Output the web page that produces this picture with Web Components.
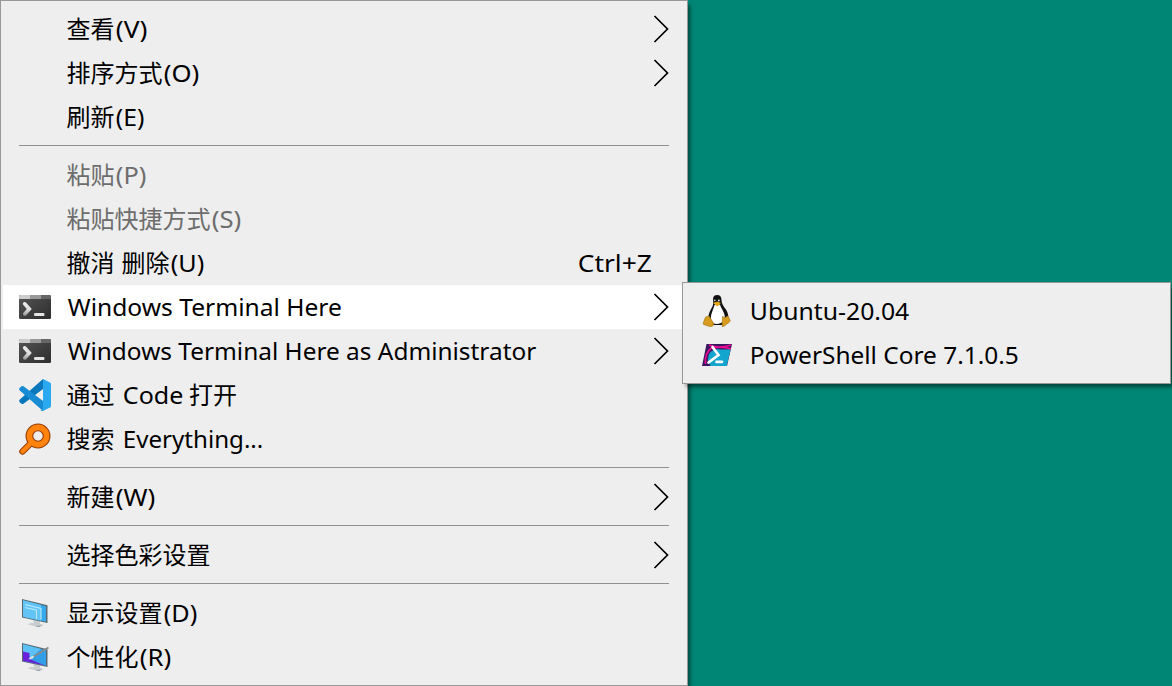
<!DOCTYPE html>
<html lang="zh-CN">
<head>
<meta charset="utf-8">
<title>Context menu</title>
<style>
html, body { margin: 0; height: 100%; overflow: hidden; background: #008675; }
body { font: 24px/44px "Noto Sans", "Noto Sans CJK SC", sans-serif; color: #000; }
</style>
</head>
<body>
<desktop-view>
  <context-menu>
    <menu-item arrow>查看<fit-text w="31.5">(V)</fit-text></menu-item>
    <menu-item arrow>排序方式<fit-text w="35.5">(O)</fit-text></menu-item>
    <menu-item>刷新<fit-text w="28.5">(E)</fit-text></menu-item>
    <menu-separator></menu-separator>
    <menu-item disabled>粘贴<fit-text w="30.5">(P)</fit-text></menu-item>
    <menu-item disabled>粘贴快捷方式<fit-text w="29.5">(S)</fit-text></menu-item>
    <menu-item>撤消<fit-text w="7"></fit-text>删除<fit-text w="33.5">(U)</fit-text><fit-text slot="shortcut" w="74">Ctrl+Z</fit-text></menu-item>
    <menu-item active arrow><app-icon slot="icon" name="terminal"></app-icon><fit-text w="274">Windows Terminal Here</fit-text></menu-item>
    <menu-item arrow><app-icon slot="icon" name="terminal"></app-icon><fit-text w="468.5">Windows Terminal Here as Administrator</fit-text></menu-item>
    <menu-item><app-icon slot="icon" name="code"></app-icon>通过<fit-text w="7"></fit-text><fit-text w="60.5">Code</fit-text><fit-text w="7"></fit-text>打开</menu-item>
    <menu-item><app-icon slot="icon" name="search"></app-icon>搜索<fit-text w="7"></fit-text><fit-text w="140.5">Everything...</fit-text></menu-item>
    <menu-separator></menu-separator>
    <menu-item arrow>新建<fit-text w="39.5">(W)</fit-text></menu-item>
    <menu-separator></menu-separator>
    <menu-item arrow>选择色彩设置</menu-item>
    <menu-separator></menu-separator>
    <menu-item><app-icon slot="icon" name="display"></app-icon>显示设置<fit-text w="33.5">(D)</fit-text></menu-item>
    <menu-item><app-icon slot="icon" name="personalize"></app-icon>个性化<fit-text w="31.5">(R)</fit-text></menu-item>
  </context-menu>
  <context-menu slot="submenu" sub>
    <menu-item><app-icon slot="icon" name="tux"></app-icon><fit-text w="159.5">Ubuntu-20.04</fit-text></menu-item>
    <menu-item><app-icon slot="icon" name="powershell"></app-icon><fit-text w="269">PowerShell Core 7.1.0.5</fit-text></menu-item>
  </context-menu>
</desktop-view>
<script>
const icons = {
  terminal: `<svg viewBox="0 0 32 32"><defs><linearGradient id="g" x2="1" y2="1"><stop stop-color="#555"/><stop offset="1" stop-color="#2d2d2d"/></linearGradient><linearGradient id="p" x2="0" y2="1"><stop stop-color="#eee"/><stop offset=".55" stop-color="#ddd"/><stop offset="1" stop-color="#909090"/></linearGradient></defs><rect y="4" width="32" height="24" rx="1.5" fill="url(#g)"/><path d="M0 8V5.5Q0 4 1.500 4H11v4z" fill="#ccc"/><path d="M11 4h11v4H11z" fill="#999"/><path d="M22 4h8.500q1.500 0 1.500 1.500V8H22z" fill="#666"/><path d="M4.200 11.800q1.500-1.500 3 0l5.600 6.300-5.600 6.200q-1.500 1.200-3-.3-.6-1.300.3-2.200l3.300-3.700-3.500-4.100q-1-1.100-.1-2.200z" fill="url(#p)"/><rect x="15" y="22" width="10.500" height="3" rx="1.200" fill="#e5e5e5"/></svg>`,
  code: `<svg viewBox="0 0 32 32"><path d="M24 0L.8 20.400q-1.300 1.400 0 2.800l1.700 1.500q1 .7 2 0L24 10z" fill="#0877bb"/><path d="M24 32L.8 11.600q-1.300-1.400 0-2.800l1.700-1.500q1-.7 2 0L24 22z" fill="#178cd4"/><path d="M24 .1L31 3.500q1 .5 1 1.500v22q0 1-1 1.500L24 31.900z" fill="#2aa8f0"/><path d="M24 0v32q-1.500.2-2.500-1 2.500 0 2.500-2z" fill="#2298e0"/></svg>`,
  search: `<svg viewBox="0 0 32 32"><path d="M12.500 19.500L3.500 28.500" stroke="#973e08" stroke-width="6.500" stroke-linecap="round"/><circle cx="19" cy="13" r="8.600" fill="none" stroke="#973e08" stroke-width="7.800"/><path d="M13 19L3.500 28.500" stroke="#ff830c" stroke-width="4.500" stroke-linecap="round"/><circle cx="19" cy="13" r="8.600" fill="none" stroke="#ff830c" stroke-width="5.600"/></svg>`,
  display: `<svg viewBox="0 0 32 32"><path d="M14 22l7 2v3l4 1-5 2-11-2.400 3-1.800 3 .5z" fill="#c8cdd0"/><path d="M9 27l7 2 7-.8-3 2z" fill="#98a8b0"/><path d="M3 2L28.500 8.300V26L3 20.500z" fill="#59686f"/><path d="M4 3.200l23 6v15.600L4 19.700z" fill="#36a9ed"/><path d="M4 3.200l18 4.700v15.800L4 19.700z" fill="#62c3f5"/><path d="M6 7.500l16 4v11M6 10.500l11.500 2.700v8.500" fill="none" stroke="#bceaff" stroke-width="1.100"/></svg>`,
  personalize: `<svg viewBox="0 0 32 32"><path d="M14 22l7 2v3l4 1-5 2-11-2.400 3-1.800 3 .5z" fill="#c8cdd0"/><path d="M9 27l7 2 7-.8-3 2z" fill="#98a8b0"/><path d="M3 2L28.500 8.300V26L3 20.500z" fill="#59686f"/><path d="M4 3.200l23 6v15.600L4 19.700z" fill="#319fe7"/><path d="M4 3.200l18 4.700-10 9-8-5z" fill="#5ec1f5"/><path d="M4 10.500l6.500 1.500v6l15.500 6.600L4 19.700z" fill="#6c20dc"/><path d="M14 16L29.500 6.500" stroke="#858b90" stroke-width="2"/><path d="M9.500 18.500q2-4 5.500-3.500 0 3-5.500 3.500z" fill="#dce2e5"/></svg>`,
  tux: `<svg viewBox="0 0 32 32"><g transform="translate(1.600 0)"><path d="M14.500 0C10.500 0 10.300 3 10.600 6c.4 5-1.500 6.500-3.600 11-2 5-2 11 1 13h12c5-1 6-6 5.500-10C25 14 19 11.500 18.900 5 18.800 1.500 17.500 0 14.500 0z" fill="#111"/><path d="M12 10L9.500 17c-2.500 6-1 12 4.500 12s9-4 8-9c-1-4-3.500-6.500-4.500-10z" fill="#fff"/><path d="M10.700 8.200q3.300-2.800 7.300-.2-.3 2.400-3.700 3.200z" fill="#e7a51a"/><circle cx="12.200" cy="5.400" r=".8" fill="#ddd"/><circle cx="16.200" cy="5.400" r="1" fill="#ddd"/><path d="M3 22l3.500-.8 4.500 7q.5 3-3 3.500L1 29.500q-1-1 .2-3zM20 21q1 3 4.500.5 1.500-1.500 1.700 1l1.500 3.500q-1 1.500-3.500 3-3 3-4.700 2.500z" fill="#d79c1d" stroke="#a87b1c" stroke-width=".7"/></g></svg>`,
  powershell: `<svg viewBox="0 0 32 32"><defs><clipPath id="c"><path d="M5.500 5H31l-5 22H1z"/></clipPath></defs><g clip-path="url(#c)"><path d="M0 0h32v32H0z" fill="#3b1660"/><path d="M17 10q5 1 13 0l-5 20H11L7 22q-1-11 10-12z" fill="#14a5ce"/><path d="M4.500 25q-1-11 6-16 10-2 20 1M8 6q10 4 22 0" fill="none" stroke="#e70d91" stroke-width="1.700"/></g><path d="M11.500 8l6 8L7.500 23.500M15.500 22.800H21" fill="none" stroke="#fff" stroke-width="2.700" stroke-linecap="round"/></svg>`
};

class DesktopView extends HTMLElement {
  constructor() {
    super();
    this.attachShadow({mode: 'open'}).innerHTML = `<style>
      :host { display: block; position: relative; height: 686px; background: #008675; overflow: hidden; }
      .sub { position: absolute; left: 682px; top: 282px; }
    </style><slot></slot><div class="sub"><slot name="submenu"></slot></div>`;
  }
}

class ContextMenu extends HTMLElement {
  constructor() {
    super();
    this.attachShadow({mode: 'open'}).innerHTML = `<style>
      :host { display: flex; flex-direction: column; box-sizing: border-box; width: 688px; padding: 6px 2px; border: 1px solid #989898; background: #eee; box-shadow: 3px 4px 4px -1px rgba(0,0,0,.5); }
      :host([sub]) { width: 489px; }
    </style><slot></slot>`;
  }
}

class MenuItem extends HTMLElement {
  constructor() {
    super();
    this.attachShadow({mode: 'open'}).innerHTML = `<style>
      :host { display: grid; grid-template-columns: 47px 1fr auto 34.5px; height: 44px; padding-left: 16px; align-items: center; white-space: nowrap; }
      :host([disabled]) { color: #6d6d6d; }
      :host([active]) { background: #fff; }
      .label { display: flex; height: 44px; padding-left: .5px; }
      .icon { display: flex; }
      .arrow { display: flex; grid-column: 4; justify-content: flex-end; padding-right: 14px; }
      .arrow svg { display: none; }
      :host([arrow]) .arrow svg { display: block; }
    </style><span class="icon"><slot name="icon"></slot></span><span class="label"><slot></slot></span><slot name="shortcut"></slot><span class="arrow"><svg width="18" height="28"><path d="M1.500 1L14.500 14L1.500 27" fill="none" stroke="#000" stroke-width="1.700"/></svg></span>`;
  }
}

class MenuSeparator extends HTMLElement {
  constructor() {
    super();
    this.attachShadow({mode: 'open'}).innerHTML = `<style>
      :host { display: block; height: 14px; padding: 6px 16px 0; box-sizing: border-box; }
      i { display: block; height: 1px; background: #909090; }
    </style><i></i>`;
  }
}

class AppIcon extends HTMLElement {
  connectedCallback() {
    this.attachShadow({mode: 'open'}).innerHTML = `<style>:host { display: block; width: 32px; height: 32px; } svg { display: block; width: 32px; height: 32px; }</style>` + icons[this.getAttribute('name')];
  }
}

/* Latin run condensed or widened to a fixed advance width. */
class FitText extends HTMLElement {
  connectedCallback() {
    const w = +this.getAttribute('w');
    const root = this.attachShadow({mode: 'open'});
    root.innerHTML = `<style>:host { display: block; width: ${w}px; height: 44px; } span { display: inline-block; transform-origin: 0 50%; white-space: pre; }</style><span><slot></slot></span>`;
    const s = root.querySelector('span');
    const natural = s.getBoundingClientRect().width;
    if (natural) s.style.transform = `translateX(.8px) scaleX(${w / natural})`;
  }
}

customElements.define('desktop-view', DesktopView);
customElements.define('context-menu', ContextMenu);
customElements.define('menu-item', MenuItem);
customElements.define('menu-separator', MenuSeparator);
customElements.define('app-icon', AppIcon);
customElements.define('fit-text', FitText);
</script>
</body>
</html>
